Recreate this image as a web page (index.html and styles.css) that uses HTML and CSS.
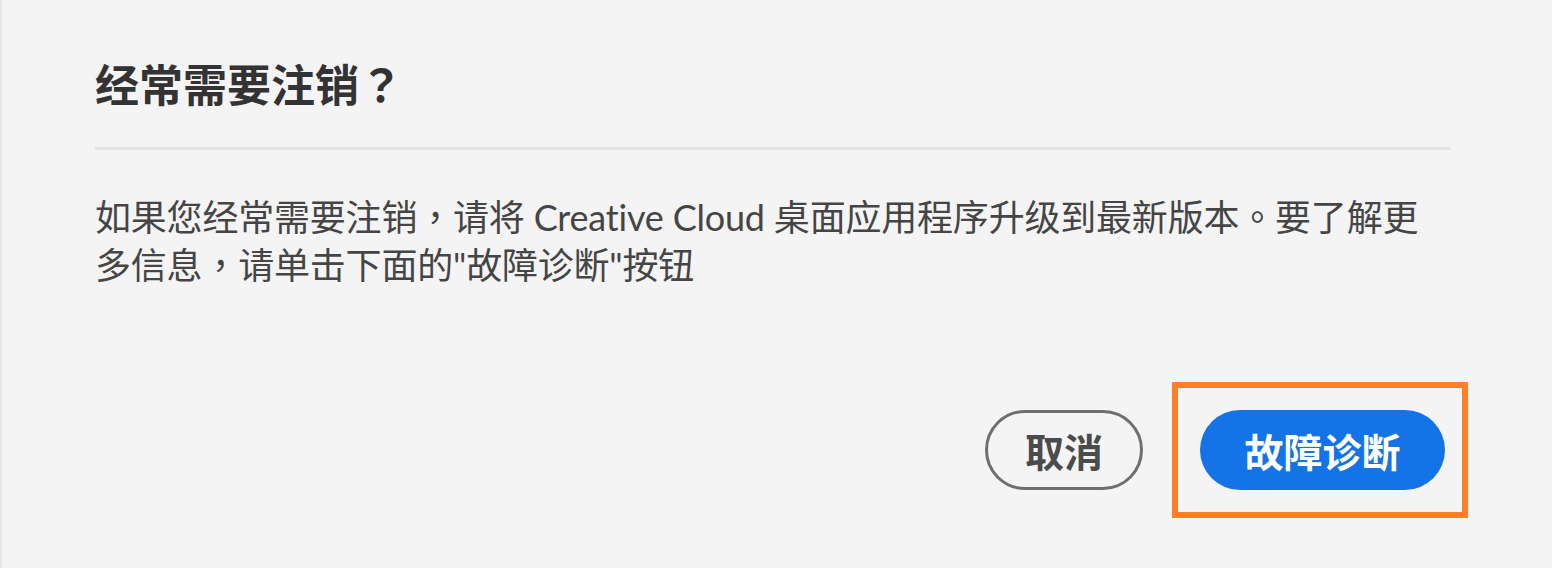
FILE: index.html
```html
<!DOCTYPE html>
<html lang="zh-CN">
<head>
	<meta charset="UTF-8">
	<meta name="viewport" content="width=device-width, initial-scale=1.0">
	<title>经常需要注销？</title>
	<link rel="stylesheet" href="styles.css">
</head>
<body>
	<div class="dialog">
		<h1 class="dialog-title">经常需要注销<span class="punct" lang="zh-TW">？</span></h1>
		<div class="divider"></div>
		<p class="dialog-text">如果您经常需要注销<span class="punct" lang="zh-TW">，</span>请将 Creative Cloud 桌面应用程序升级到最新版本<span class="punct" lang="zh-TW">。</span>要了解更多信息<span class="punct" lang="zh-TW">，</span>请单击下面的"故障诊断"按钮</p>
		<div class="dialog-buttons">
			<button class="btn btn-cancel">取消</button>
			<span class="highlight">
				<button class="btn btn-primary">故障诊断</button>
			</span>
		</div>
	</div>
</body>
</html>
```

FILE: styles.css
```css
body {
	margin: 0;
	height: 568px;
	background-color: #f4f4f4;
	border-left: 2px solid #e6e6e6;
	font-family: Lato, "Noto Sans CJK SC", sans-serif;
	color: #454545;
	overflow: hidden;
}
.dialog {
	padding: 59px 102px 0 93px;
}
.dialog-title {
	margin: 0;
	font-size: 44px;
	line-height: 53px;
	font-weight: bold;
	color: #333333;
}
.punct {
	font-family: "Noto Sans CJK TC", sans-serif;
	line-height: 1;
}
.divider {
	margin-top: 35px;
	height: 3px;
	background-color: #e3e3e3;
}
.dialog-text {
	margin: 43px 0 0 0;
	font-size: 36px;
	line-height: 48px;
	letter-spacing: -0.2px;
}
.dialog-buttons {
	display: flex;
	justify-content: flex-end;
	align-items: center;
	margin-top: 93px;
	margin-right: -18px;
}
.btn {
	height: 80px;
	border-radius: 40px;
	font-family: Lato, "Noto Sans CJK SC", sans-serif;
	font-size: 39px;
	font-weight: bold;
	padding: 0;
	cursor: default;
}
.btn-cancel {
	width: 158px;
	background-color: transparent;
	border: 3px solid #6e6e6e;
	color: #4b4b4b;
	margin-right: 29px;
}
.btn-primary {
	width: 245px;
	background-color: #1473e6;
	border: none;
	color: #ffffff;
}
.highlight {
	display: flex;
	border: 6px solid #ff7f27;
	padding: 22px 17px 22px 22px;
}
```
